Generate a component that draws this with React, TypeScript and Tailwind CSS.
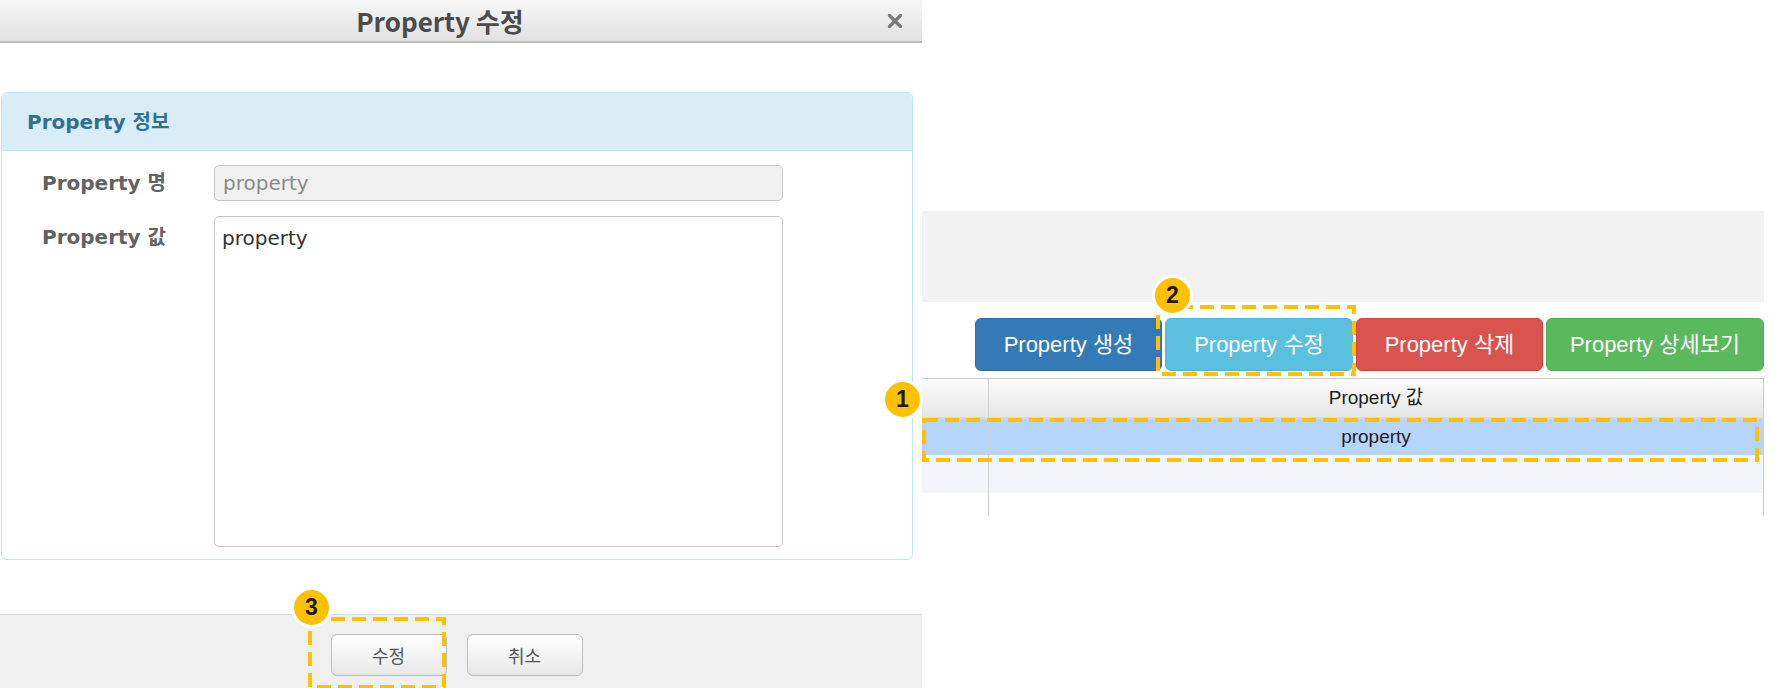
import { ReactNode } from "react";

const dejavu = "font-['DejaVu_Sans','Noto_Sans_CJK_KR',sans-serif]";
const arial = "font-['Liberation_Sans','Noto_Sans_CJK_KR',sans-serif]";
const noto = "font-['Noto_Sans_CJK_KR',sans-serif]";

function DashBox({ w, h, className }: { w: number; h: number; className: string }) {
  return (
    <svg className={`pointer-events-none absolute ${className}`} width={w} height={h}>
      <rect x={2} y={2} width={w - 4} height={h - 4} fill="none" stroke="#ffc000" strokeWidth={4} strokeDasharray="14 7" />
    </svg>
  );
}

function Badge({ n, className }: { n: number; className: string }) {
  return (
    <div
      className={`absolute flex h-[41px] w-[41px] items-center justify-center rounded-full border-[3px] border-white bg-[#ffc000] text-[23px] font-bold text-[#1a1a1a] ${arial} ${className}`}
    >
      {n}
    </div>
  );
}

function ActionButton({ color, children }: { color: string; children: ReactNode }) {
  return (
    <button className={`flex h-[53px] w-full items-center justify-center rounded-md border text-[22px] text-white ${arial} ${color}`}>
      {children}
    </button>
  );
}

export default function App() {
  return (
    <div className="relative flex h-[688px] w-[1774px] overflow-hidden bg-white">
      {/* dialog */}
      <div className="flex w-[922px] flex-col">
        <div className="flex h-[43px] items-center border-b-2 border-[#bdbdbd] bg-gradient-to-b from-[#f7f7f7] to-[#e1e1e1]">
          <div className={`flex-1 text-center text-[26px] font-bold leading-none text-[#4b4b4b] ${noto}`}>Property 수정</div>
          <svg className="ml-[7px] mr-[19px]" width="16" height="14" viewBox="0 0 16 14">
            <path d="M2.5 1.5 L13.5 12.5 M13.5 1.5 L2.5 12.5" stroke="#7a7a7a" strokeWidth="3.2" strokeLinecap="round" />
          </svg>
        </div>

        <div className="pl-px pr-[9px] pt-[49px]">
          <div className="rounded-md border border-[#bce8f1]">
            <div className={`flex h-[58px] items-center rounded-t-md border-b border-[#bce8f1] bg-[#d9edf7] px-[25px] text-[20px] font-bold text-[#31708f] ${dejavu}`}>
              Property 정보
            </div>
            <div className="flex flex-col gap-[15px] pb-[12px] pl-[40px] pt-[14px]">
              <div className="flex items-center">
                <div className={`w-[172px] text-[20px] font-bold text-[#626262] ${dejavu}`}>Property 명</div>
                <div className={`flex h-[36px] w-[569px] items-center rounded-[5px] border border-[#c8c8c8] bg-[#f0f0f0] px-[8px] text-[20px] text-[#8a8a8a] ${dejavu}`}>
                  property
                </div>
              </div>
              <div className="flex items-start">
                <div className={`w-[172px] pt-[6px] text-[20px] font-bold text-[#626262] ${dejavu}`}>Property 값</div>
                <div className={`h-[331px] w-[569px] rounded-[5px] border border-[#c8c8c8] bg-white px-[7px] pt-[6px] text-[20px] text-[#333] ${dejavu}`}>
                  property
                </div>
              </div>
            </div>
          </div>
        </div>

        <div className="flex-1" />

        <div className="flex h-[74px] justify-center gap-[20px] border-t border-[#dcdcdc] bg-[#f0f0f0] pr-[9px] pt-[19px]">
          <button className={`h-[42px] w-[116px] rounded-md border border-[#bdbdbd] bg-gradient-to-b from-white to-[#e8e8e8] text-[18px] text-[#555] ${noto}`}>
            수정
          </button>
          <button className={`h-[42px] w-[116px] rounded-md border border-[#bdbdbd] bg-gradient-to-b from-white to-[#e8e8e8] text-[18px] text-[#555] ${noto}`}>
            취소
          </button>
        </div>
      </div>

      {/* list side */}
      <div className="flex flex-1 flex-col pr-[10px] pt-[211px]">
        <div className="h-[91px] bg-[#f2f2f2]" />
        <div className="mt-[16px] flex justify-end gap-[3px]">
          <div className="w-[187px]">
            <ActionButton color="border-[#2e6da4] bg-[#337ab7]">Property 생성</ActionButton>
          </div>
          <div className="w-[188px]">
            <ActionButton color="border-[#46b8da] bg-[#5bc0de]">Property 수정</ActionButton>
          </div>
          <div className="w-[187px]">
            <ActionButton color="border-[#d43f3a] bg-[#d9534f]">Property 삭제</ActionButton>
          </div>
          <div className="w-[218px]">
            <ActionButton color="border-[#4cae4c] bg-[#5cb85c]">Property 상세보기</ActionButton>
          </div>
        </div>

        <div className={`mt-[7px] grid grid-cols-[67px_1fr] border-r border-t border-[#cccccc] text-[19px] text-[#1e1e1e] ${arial}`}>
          <div className="h-[40px] border-b-2 border-r border-b-[#dadada] border-r-[#d0d0d0] bg-gradient-to-b from-[#fbfbfb] to-[#e6e6e6]" />
          <div className="flex h-[40px] items-center justify-center border-b-2 border-[#dadada] bg-gradient-to-b from-[#fbfbfb] to-[#e6e6e6]">
            Property 값
          </div>
          <div className="h-[36px] border-r border-[#d0d0d0] bg-[#b5d5fb]" />
          <div className="flex h-[36px] items-center justify-center bg-[#b5d5fb]">property</div>
          <div className="h-[38px] border-r border-[#d0d0d0] bg-[#f2f5fa]" />
          <div className="h-[38px] bg-[#f2f5fa]" />
          <div className="h-[23px] border-r border-[#d0d0d0]" />
          <div className="h-[23px]" />
        </div>
      </div>

      {/* annotations */}
      <DashBox w={837} h={44} className="left-[922px] top-[418px]" />
      <DashBox w={200} h={71} className="left-[1156px] top-[305px]" />
      <DashBox w={138} h={72} className="left-[308px] top-[617px]" />
      <Badge n={1} className="left-[882px] top-[379px]" />
      <Badge n={2} className="left-[1152px] top-[275px]" />
      <Badge n={3} className="left-[291px] top-[587px]" />
    </div>
  );
}
